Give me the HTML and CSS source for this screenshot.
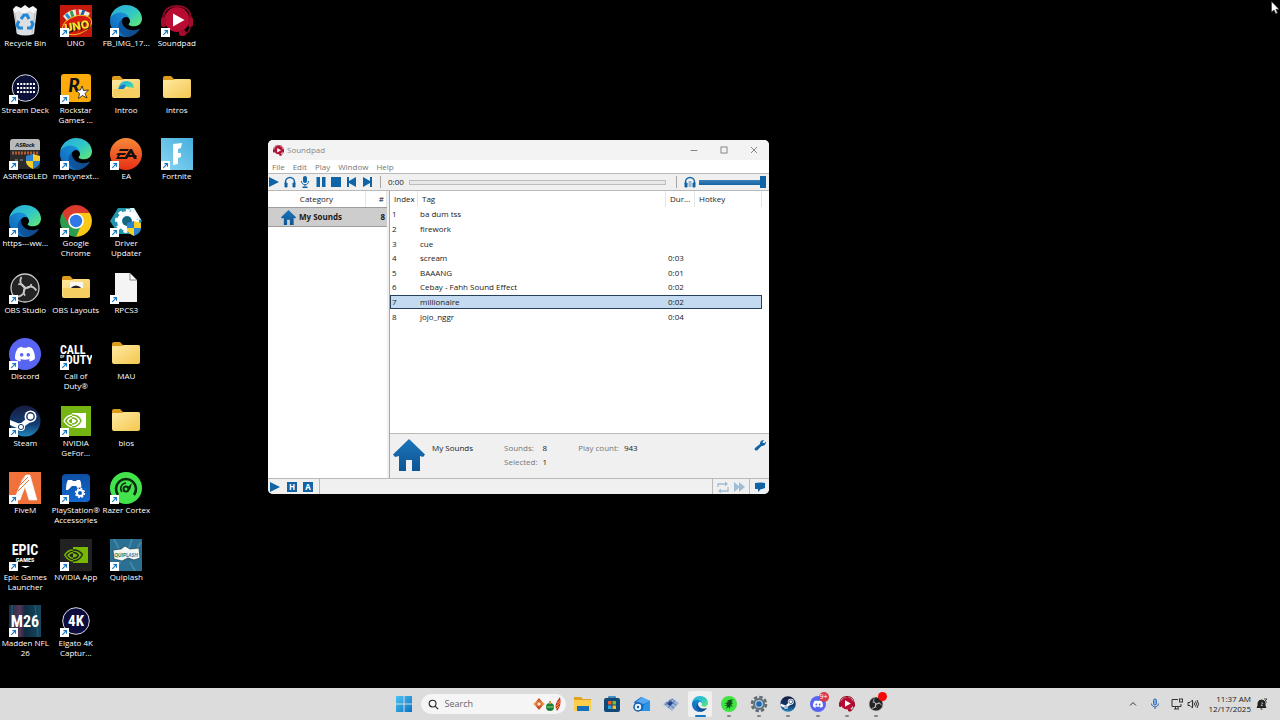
FILE: index.html
```html
<!DOCTYPE html>
<html lang="en">
<head>
  <meta charset="UTF-8">
  <meta name="viewport" content="width=device-width, initial-scale=1.0">
  <title>Desktop</title>
  <link rel="stylesheet" href="styles.css">
</head>
<body>
  <!-- shared icons -->
  <svg class="sprite" width="0" height="0" aria-hidden="true">
    <defs>
      <linearGradient id="gFolder" x1="0" y1="0" x2="1" y2="1"><stop offset="0" stop-color="#ffe9a3"/><stop offset="1" stop-color="#f3c74f"/></linearGradient>
      <linearGradient id="gEdgeA" x1="0" y1="0" x2="1" y2="0"><stop offset="0" stop-color="#0c59a4"/><stop offset="1" stop-color="#114a8b"/></linearGradient>
      <linearGradient id="gEdgeB" x1="1" y1="0" x2="0" y2="1"><stop offset="0" stop-color="#1b9de2"/><stop offset="1" stop-color="#0f5fb4"/></linearGradient>
      <linearGradient id="gEdgeC" x1="0" y1="0" x2="1" y2="1"><stop offset="0" stop-color="#2aa9dc"/><stop offset=".5" stop-color="#2fc6c8"/><stop offset="1" stop-color="#66eb6e"/></linearGradient>
      <linearGradient id="gEa" x1="0" y1="0" x2="0" y2="1"><stop offset="0" stop-color="#f58a38"/><stop offset="1" stop-color="#e62e14"/></linearGradient>
      <linearGradient id="gSteam" x1="0" y1="0" x2="0" y2="1"><stop offset="0" stop-color="#171b42"/><stop offset=".6" stop-color="#123c72"/><stop offset="1" stop-color="#2487bd"/></linearGradient>
      <linearGradient id="gFort" x1="1" y1="0" x2="0" y2="1"><stop offset="0" stop-color="#45aede"/><stop offset="1" stop-color="#8bd7f2"/></linearGradient>
      <linearGradient id="gPs" x1="0" y1="0" x2="0" y2="1"><stop offset="0" stop-color="#0e4fa4"/><stop offset="1" stop-color="#1368cf"/></linearGradient>
      <linearGradient id="gHouse" x1="0" y1="0" x2="0" y2="1"><stop offset="0" stop-color="#1c74ba"/><stop offset="1" stop-color="#0c5594"/></linearGradient>
      <linearGradient id="gWin" x1="0" y1="0" x2="1" y2="1"><stop offset="0" stop-color="#4cc4f2"/><stop offset="1" stop-color="#0a72c6"/></linearGradient>
      <linearGradient id="gMadden" x1="0" y1="0" x2="1" y2="0"><stop offset="0" stop-color="#123348"/><stop offset=".35" stop-color="#573455"/><stop offset=".5" stop-color="#0e2c42"/><stop offset="1" stop-color="#154a62"/></linearGradient>
    </defs>

    <symbol id="arrow" viewBox="0 0 9 9">
      <rect width="9" height="9" fill="#fff"/>
      <path d="M2.3 6.8 6 3.1M3.4 2.6h3.1v3.1" fill="none" stroke="#1978c4" stroke-width="1.1"/>
    </symbol>
    <symbol id="edge" viewBox="0 0 256 256">
      <path fill="url(#gEdgeA)" d="M231.1 190.5c-3.4 1.8-6.9 3.4-10.5 4.7-11.5 4.3-23.6 6.5-35.9 6.5-47.3 0-88.5-32.5-88.5-74.3.1-11.4 6.4-21.9 16.4-27.3-42.8 1.8-53.8 46.4-53.8 72.5 0 73.9 68.1 81.4 82.8 81.4 7.9 0 19.8-2.3 27-4.6l1.3-.4c27.6-9.5 51-28.1 66.6-52.8 1.2-1.9.6-4.3-1.2-5.5-1.3-.8-2.9-.9-4.2-.2z"/>
      <path fill="url(#gEdgeB)" d="M105.7 241.4c-8.9-5.5-16.6-12.8-22.7-21.3-26.3-36-18.4-86.5 17.6-112.8 3.8-2.7 7.7-5.2 11.9-7.2 3.1-1.5 8.4-4.1 15.5-4 10.1.1 19.6 4.9 25.7 13 4 5.4 6.3 11.9 6.4 18.7 0-.2 24.5-79.6-80-79.6-43.9 0-80 41.7-80 78.2-.2 19.3 4 38.5 12.1 56 27.6 58.8 94.8 87.6 156.4 67.1-21.1 6.6-44.1 3.7-62.9-8.1z"/>
      <path fill="url(#gEdgeC)" d="M152.3 148.9c-.8 1-3.3 2.5-3.3 5.7 0 2.6 1.7 5.1 4.7 7.2 14.4 10 41.5 8.7 41.6 8.7 10.7 0 21.1-2.9 30.3-8.3 18.8-11 30.4-31.1 30.4-52.9.3-22.4-8-37.3-11.3-43.9C223.5 23.9 177.7 0 128 0 58 0 1 56.2 0 126.2c.5-36.5 36.8-66 80-66 3.5 0 23.5.3 42 10.1 16.3 8.6 24.9 18.9 30.8 29.2 6.2 10.7 7.3 24.1 7.3 29.5 0 5.3-2.7 13.3-7.8 19.9z"/>
    </symbol>
    <symbol id="folder" viewBox="0 0 32 32">
      <path d="M2 6q0-2 2-2h6l3 3h15q2 0 2 2v4H2z" fill="#dc9b1d"/>
      <path d="M2 9q0-1 1-1h9l2-1h14q2 0 2 2v15q0 2-2 2H4q-2 0-2-2z" fill="url(#gFolder)"/>
    </symbol>
    <symbol id="soundpad" viewBox="0 0 32 32">
      <circle cx="16" cy="14.500" r="12.500" fill="#b80c32"/>
      <path d="M2.500 16C1 5 8 1 16 1s15 4 13.500 15" fill="none" stroke="#8c0925" stroke-width="2"/>
      <rect x="0" y="12" width="5" height="10" rx="2.500" fill="#a50b2c"/>
      <rect x="27" y="12" width="5" height="10" rx="2.500" fill="#a50b2c"/>
      <path d="M29 21c0 6-3 7-6 8" fill="none" stroke="#8c0925" stroke-width="1.500"/>
      <rect x="18" y="25" width="7" height="6" rx="2.500" fill="#a50b2c"/>
      <path d="M12 8.500v13L23.500 15z" fill="#fff"/>
    </symbol>
    <symbol id="shield" viewBox="0 0 14 15">
      <path d="M7 0 14 2v5H7z" fill="#f7cf2c"/><path d="M7 0 0 2v5h7z" fill="#2b83d0"/>
      <path d="M0 7h7v8C3 13 0 11 0 7z" fill="#f7cf2c"/><path d="M14 7H7v8c4-2 7-4 7-8z" fill="#2b83d0"/>
    </symbol>
    <symbol id="steam" viewBox="0 0 32 32">
      <circle cx="16" cy="16" r="15.500" fill="url(#gSteam)"/>
      <path d="m1 15 10 4 7-6 5 3-7 5c0 4-6 6-8 2L1 20z" fill="#fff"/>
      <circle cx="12" cy="22" r="4" fill="#fff"/><circle cx="12" cy="22" r="2.600" fill="none" stroke="#174376" stroke-width="1"/>
      <circle cx="21.500" cy="11.500" r="6" fill="#fff"/><circle cx="21.500" cy="11.500" r="3.700" fill="none" stroke="#16305c" stroke-width="1.400"/>
    </symbol>
    <symbol id="discord" viewBox="0 0 32 32">
      <circle cx="16" cy="16" r="16" fill="#5865f2"/>
      <path transform="translate(6 6.500) scale(.83 .8)" fill="#fff" d="M20.317 4.370a19.790 19.790 0 0 0-4.885-1.515c-.3.400-.5.900-.687 1.287a18.270 18.270 0 0 0-5.487 0c-.2-.5-.4-.9-.696-1.287A19.736 19.736 0 0 0 3.677 4.370C.533 9.046-.32 13.580.099 18.057c1.800 1.400 3.900 2.400 6.024 3.087.5-.6.900-1.300 1.310-2.022l-1.913-1c.1-.1.400-.3.441-.430 3.928 1.793 8.180 1.793 12.062 0l.45.302-1.879 1.100c.4.700.8 1.400 1.309 2.050a19.839 19.839 0 0 0 6.002-3.087c.5-5.177-.838-9.674-3.588-13.687zM8.020 15.330c-1.183 0-2.157-1.085-2.157-2.419 0-1.333.956-2.419 2.157-2.419s2.176 1.096 2.157 2.420c0 1.333-.956 2.418-2.157 2.418zm7.975 0c-1.183 0-2.157-1.085-2.157-2.419 0-1.333.955-2.419 2.157-2.419s2.176 1.096 2.157 2.420c0 1.333-.946 2.418-2.157 2.418z"/>
    </symbol>
    <symbol id="obs" viewBox="0 0 32 32">
      <circle cx="16" cy="16" r="14" fill="#232323" stroke="#c8c8c8" stroke-width="1.300"/>
      <g id="blade"><path d="M12.500 5c-3 5 0 9 4 10.500 3 1 5.500-1 6-3.500" fill="none" stroke="#c8c8c8" stroke-width="1.700"/></g>
      <use href="#blade" transform="rotate(120 16 16)"/><use href="#blade" transform="rotate(240 16 16)"/>
    </symbol>
    <symbol id="nveye" viewBox="0 0 24 16">
      <path d="M9 0h15v16H9z" fill="#77b900"/>
      <path d="M9 3C5 3 2 6 .8 8 3 12 6 14 9.500 14c4 0 7-2 9-4.500M9 5.500C6.500 5.700 5 7 4 8.200 5.500 10.500 7.500 11.500 9.500 11.500c2.500 0 4-1.500 5-3M9 3c5-.3 8 2.500 9.500 4.500M9 5.500c3-.2 4.500 1.500 5.500 3M9 8c2-.5 3 .5 3 1.500" fill="none" stroke="#77b900" stroke-width="1.500"/>
      <path d="M9 3c5-.3 8 2.500 9.500 4.500-2 4-5.500 6.500-9.500 6.500M9 5.500c3-.2 4.500 1.500 5.500 3-1.500 2-3 3-5.500 3" fill="none" stroke="#222" stroke-width="1.300"/>
    </symbol>
    <symbol id="house" viewBox="0 0 32 32">
      <path d="M16 0 32 15.500 30 18l-3-1v15h-8V21h-6v11H6V17l-4 1-2-2.500z" fill="url(#gHouse)"/>
    </symbol>
    <symbol id="play" viewBox="0 0 12 12"><path d="M1 1v10l10-5z"/></symbol>
    <symbol id="head" viewBox="0 0 12 12">
      <path d="M1.500 8V6a4.500 4.500 0 0 1 9 0v2" fill="none" stroke="#1063a5" stroke-width="1.500"/>
      <rect x=".5" y="6.500" width="3" height="5" rx="1"/><rect x="8.500" y="6.500" width="3" height="5" rx="1"/>
    </symbol>
  </svg>

  <main class="desktop">
    <div class="icons">
      <ul class="icon-column">
        <li><a href="#"><span class="pic"><svg viewBox="0 0 32 32"><path d="M4 4 28 4 25 29Q16 32 8 29z" fill="#dcdfe2"/><path d="m4 4 3-3 5 2 4-3 4 3 4-2 4 3-3 4-5-2-5 3-5-3-4 2z" fill="#f4f5f6"/><path d="m6 8 2 20M26 8l-3 20" stroke="#b6babd"/><path d="m12 14 3-4h3l2 4m2 2 2 3-2 4h-4m-4 0h-4l-2-3 2-4" fill="none" stroke="#2188d8" stroke-width="3"/></svg></span>Recycle Bin</a></li>
        <li><a href="#"><span class="pic"><svg viewBox="0 0 32 32"><circle cx="16.500" cy="16" r="13.300" fill="#0b1038" stroke="#d8dae3"/><path d="M8 12h18M8 16h18M8 20h18" stroke="#fff" stroke-width="2" stroke-dasharray="2 1.200"/></svg><svg class="arrow"><use href="#arrow"/></svg></span>Stream Deck</a></li>
        <li><a href="#"><span class="pic"><svg viewBox="0 0 32 32"><rect x="1" y="1" width="30" height="30" rx="3" fill="#2b2b2b"/><path d="M1 12V4q0-3 3-3h24q3 0 3 3v8z" fill="#b9babb"/><text x="16" y="9" text-anchor="middle" class="logo-italic" font-size="6" fill="#111">ASRock</text><path d="M3 15h26" stroke="#b15c31" stroke-width="3" stroke-dasharray="2 1"/><path d="M6 22h8" stroke="#999" stroke-dasharray="3 2"/><use href="#shield" x="17" y="16" width="14" height="15"/></svg><svg class="arrow"><use href="#arrow"/></svg></span>ASRRGBLED</a></li>
        <li><a href="#"><span class="pic"><svg><use href="#edge"/></svg><svg class="arrow"><use href="#arrow"/></svg></span>https---ww...</a></li>
        <li><a href="#"><span class="pic"><svg><use href="#obs"/></svg><svg class="arrow"><use href="#arrow"/></svg></span>OBS Studio</a></li>
        <li><a href="#"><span class="pic"><svg><use href="#discord"/></svg><svg class="arrow"><use href="#arrow"/></svg></span>Discord</a></li>
        <li><a href="#"><span class="pic"><svg><use href="#steam"/></svg><svg class="arrow"><use href="#arrow"/></svg></span>Steam</a></li>
        <li><a href="#"><span class="pic"><svg viewBox="0 0 32 32"><rect width="32" height="32" fill="#f0713a"/><path d="m17 3 4 0 7 25h-8l-4-13-5 13H5L12 11zM12 9l5-6M10 14l8-9" fill="#fff" stroke="#fff" stroke-width=".5"/><path d="m7 17 12-12M9 19l11-11" stroke="#f0713a" stroke-width="1"/></svg><svg class="arrow"><use href="#arrow"/></svg></span>FiveM</a></li>
        <li><a href="#"><span class="pic"><svg viewBox="0 0 32 32"><text x="16" y="16" text-anchor="middle" class="logo-tall" font-size="14" fill="#fff">EPIC</text><text x="16" y="23" text-anchor="middle" class="logo-wide" font-size="5" fill="#fff">GAMES</text><path d="M12 27h9l-4.500 2z" fill="#fff"/></svg><svg class="arrow"><use href="#arrow"/></svg></span>Epic Games<br>Launcher</a></li>
        <li><a href="#"><span class="pic"><svg viewBox="0 0 32 32"><rect width="32" height="32" fill="url(#gMadden)"/><path d="M3 0v32M26 0l3 32" stroke="#1d6480"/><text x="16" y="22" text-anchor="middle" class="logo-narrow" font-size="16" fill="#fff">M26</text></svg><svg class="arrow"><use href="#arrow"/></svg></span>Madden NFL<br>26</a></li>
      </ul>

      <ul class="icon-column">
        <li><a href="#"><span class="pic"><svg viewBox="0 0 32 32"><rect width="32" height="32" fill="#c5190d"/><path d="M3 11Q14-1 30 8l-4 7Q15 8 7 16z" fill="#f5e9d8"/><path d="m6 9 4 5" stroke="#288bd0" stroke-width="3"/><path d="m11 6 2 6" stroke="#31a052" stroke-width="3"/><path d="m17 4 1 7" stroke="#d9302b" stroke-width="3"/><path d="m24 5-3 7" stroke="#265da8" stroke-width="3"/><ellipse cx="17" cy="20" rx="15" ry="9" transform="rotate(-18 17 20)" fill="#d81b0f" stroke="#f2b51d"/><text x="18" y="26" text-anchor="middle" class="logo-wide" font-size="11" fill="#111" transform="rotate(-10 17 22)">UNO</text><text x="17" y="25" text-anchor="middle" class="logo-wide" font-size="11" fill="#ffe02e" transform="rotate(-10 17 22)">UNO</text></svg><svg class="arrow"><use href="#arrow"/></svg></span>UNO</a></li>
        <li><a href="#"><span class="pic"><svg viewBox="0 0 32 32"><rect x="1" y="2" width="30" height="28" rx="3" fill="#fbab0b"/><text x="14" y="20" text-anchor="middle" class="logo-italic" font-size="19" fill="#111">R</text><path d="m22 14 1.500 4.500 5-.5-3.500 3.500 2 4.500-4.500-2.500-4 3 1-5-3.500-3 4.500-.5z" fill="#fff" stroke="#111" stroke-width=".8"/></svg><svg class="arrow"><use href="#arrow"/></svg></span>Rockstar<br>Games ...</a></li>
        <li><a href="#"><span class="pic"><svg><use href="#edge"/></svg><svg class="arrow"><use href="#arrow"/></svg></span>markynext...</a></li>
        <li><a href="#"><span class="pic"><svg viewBox="0 0 32 32"><path d="M16 16 2.200 8A16 16 0 0 0 16 32l7-12z" fill="#2a9d4e"/><path d="M16 16h7l-7 16A16 16 0 0 0 29.800 8H16z" fill="#fbc818"/><path d="M2.200 8a16 16 0 0 1 27.600 0H16l-7 12z" fill="#db3a2d"/><circle cx="16" cy="16" r="7.800" fill="#fff"/><circle cx="16" cy="16" r="6.200" fill="#2f78e8"/></svg><svg class="arrow"><use href="#arrow"/></svg></span>Google<br>Chrome</a></li>
        <li><a href="#"><span class="pic"><svg viewBox="0 0 32 32"><use href="#folder" width="32" height="32"/><path d="M10 10h13v7H10z" fill="#f8f8f3"/><path d="M12 17a5 5 0 0 1 8 0" fill="none" stroke="#222" stroke-width="3"/><path d="M3 16h27v9H3z" fill="#f5cf61"/></svg></span>OBS Layouts</a></li>
        <li><a href="#"><span class="pic"><svg viewBox="0 0 32 32"><text x="0" y="16" class="logo-tall" font-size="12" fill="#fff">CALL</text><text x="0" y="20" class="logo-narrow" font-size="4" fill="#fff">OF</text><text x="6" y="26" class="logo-tall" font-size="12" fill="#fff">DUTY</text></svg><svg class="arrow"><use href="#arrow"/></svg></span>Call of<br>Duty®</a></li>
        <li><a href="#"><span class="pic"><svg viewBox="0 0 32 32"><rect x="1" y="1" width="30" height="30" fill="#74b514"/><path d="M12 8h14v15H12z" fill="#fff"/><path d="M12 10q-6 1-8 6 4 6 9 6 5 0 8-5M12 13q-3 0-4.500 3 2 3 5 3 3 0 5-3" fill="none" stroke="#fff" stroke-width="1.300"/><path d="M12 10q7 0 9 6-3 6-9 6M12 13q4 0 5.500 3-2 3-5.500 3" fill="none" stroke="#74b514" stroke-width="1.400"/></svg><svg class="arrow"><use href="#arrow"/></svg></span>NVIDIA<br>GeFor...</a></li>
        <li><a href="#"><span class="pic"><svg viewBox="0 0 32 32"><rect x="2" y="2" width="28" height="28" rx="4" fill="url(#gPs)"/><path d="M8 8h4l1 1h3l1-1h3q2 4 1 10h-2l-3-4h-4l-4 4H6q0-7 2-10z" fill="#fff"/><circle cx="20" cy="21" r="5.500" fill="#125bb9"/><circle cx="20" cy="21" r="3" fill="none" stroke="#fff" stroke-width="2"/><circle cx="20" cy="21" r="4.500" fill="none" stroke="#fff" stroke-width="1.300" stroke-dasharray="2 1.500"/></svg><svg class="arrow"><use href="#arrow"/></svg></span>PlayStation®<br>Accessories</a></li>
        <li><a href="#"><span class="pic"><svg viewBox="0 0 32 32"><rect width="32" height="32" fill="#222"/><use href="#nveye" x="4" y="8" width="24" height="16"/></svg><svg class="arrow"><use href="#arrow"/></svg></span>NVIDIA App</a></li>
        <li><a href="#"><span class="pic"><svg viewBox="0 0 32 32"><circle cx="16" cy="16" r="13.300" fill="#0b0b3c" stroke="#d8dae3"/><text x="16" y="21" text-anchor="middle" class="logo-narrow" font-size="15" fill="#fff">4K</text></svg><svg class="arrow"><use href="#arrow"/></svg></span>Elgato 4K<br>Captur...</a></li>
      </ul>

      <ul class="icon-column">
        <li><a href="#"><span class="pic"><svg><use href="#edge"/></svg><svg class="arrow"><use href="#arrow"/></svg></span>FB_IMG_17...</a></li>
        <li><a href="#"><span class="pic"><svg viewBox="0 0 32 32"><use href="#folder" width="32" height="32"/><path d="M8 18Q9 9 17 9q7 1 7 7l-6-1q-2-2-5 3z" fill="url(#gEdgeC)"/><path d="M8 18q2-6 8-5l-3 5z" fill="#1877bf"/><path d="M3 17h27v8H3z" fill="#f5cf61"/></svg></span>Introo</a></li>
        <li><a href="#"><span class="pic"><svg viewBox="0 0 32 32"><circle cx="16" cy="16" r="16" fill="url(#gEa)"/><path d="M10 11h9l-1 2H9zM8 15h8l-1 2h-5l-1 2h6l5-8h2l5 10h-3l-3-6-4 6H6l2-4H6zM19 17h7l1 2h-8z" fill="#16100e"/></svg><svg class="arrow"><use href="#arrow"/></svg></span>EA</a></li>
        <li><a href="#"><span class="pic"><svg viewBox="0 0 32 32"><path d="m8 3 16 0 8 13-8 13H8L0 16z" fill="#1f95ae"/><path d="m20 3 4 0 7 12-9-2z" fill="#e9f4f5"/><circle cx="17" cy="16" r="7.500" fill="none" stroke="#fff" stroke-width="5"/><circle cx="17" cy="16" r="10.500" fill="none" stroke="#fff" stroke-width="3" stroke-dasharray="4 4"/><circle cx="17" cy="16" r="4.500" fill="#17657d"/><use href="#shield" x="17" y="16" width="14" height="15"/></svg><svg class="arrow"><use href="#arrow"/></svg></span>Driver<br>Updater</a></li>
        <li><a href="#"><span class="pic"><svg viewBox="0 0 32 32"><path d="M5 1h15l7 7v22H5z" fill="#f4f4f4"/><path d="m20 1 7 7h-7z" fill="#fff" stroke="#555" stroke-width=".7"/></svg><svg class="arrow"><use href="#arrow"/></svg></span>RPCS3</a></li>
        <li><a href="#"><span class="pic"><svg><use href="#folder"/></svg></span>MAU</a></li>
        <li><a href="#"><span class="pic"><svg><use href="#folder"/></svg></span>bios</a></li>
        <li><a href="#"><span class="pic"><svg viewBox="0 0 32 32"><circle cx="16" cy="16" r="16" fill="#42e34b"/><path d="M8 23a10 10 0 1 1 16 0" fill="none" stroke="#0b2a10" stroke-width="2.600"/><path d="M12 20a5.500 5.500 0 0 1 4-9" fill="none" stroke="#0b2a10" stroke-width="1.500"/><circle cx="16" cy="17" r="2.500" fill="none" stroke="#0b2a10" stroke-width="2"/><path d="m17 16 5-5-2 7z" fill="#0b2a10"/></svg><svg class="arrow"><use href="#arrow"/></svg></span>Razer Cortex</a></li>
        <li><a href="#"><span class="pic"><svg viewBox="0 0 32 32"><rect width="32" height="32" fill="#2b6f92"/><path d="m4 0 5 10M22 0l-3 9M31 3l-5 8M5 31l6-9M25 32l-5-9" stroke="#3e88a8" stroke-width="2"/><path d="m3 11 8-1 4-3 5 3 9-1 1 10-6 2-6-2-6 3-8-2z" fill="#f2f7f2" stroke="#123a52" stroke-width=".7"/><text x="16" y="18" text-anchor="middle" class="logo-italic" font-size="5" fill="#267f46">QUIP<tspan fill="#2b7fb5">LASH</tspan></text></svg><svg class="arrow"><use href="#arrow"/></svg></span>Quiplash</a></li>
      </ul>

      <ul class="icon-column">
        <li><a href="#"><span class="pic"><svg><use href="#soundpad"/></svg><svg class="arrow"><use href="#arrow"/></svg></span>Soundpad</a></li>
        <li><a href="#"><span class="pic"><svg><use href="#folder"/></svg></span>intros</a></li>
        <li><a href="#"><span class="pic"><svg viewBox="0 0 32 32"><rect width="32" height="32" fill="url(#gFort)"/><path d="m12 6 9-1-1 5-3 1v4h3v4l-3 1v6l-5 1z" fill="#fff"/></svg><svg class="arrow"><use href="#arrow"/></svg></span>Fortnite</a></li>
      </ul>
    </div>

    <section class="window">
      <header class="titlebar">
        <svg class="app-icon"><use href="#soundpad"/></svg>
        <h1>Soundpad</h1>
        <div class="win-buttons">
          <button aria-label="Minimize"><svg viewBox="0 0 8 8"><path d="M.5 4.500h7"/></svg></button>
          <button aria-label="Maximize"><svg viewBox="0 0 8 8"><rect x="1" y="1" width="6" height="6"/></svg></button>
          <button aria-label="Close"><svg viewBox="0 0 8 8"><path d="m1 1 6 6M7 1 1 7"/></svg></button>
        </div>
      </header>
      <nav class="menubar">
        <button>File</button>
        <button>Edit</button>
        <button>Play</button>
        <button>Window</button>
        <button>Help</button>
      </nav>
      <div class="toolbar">
        <div class="transport">
          <button aria-label="Play"><svg><use href="#play"/></svg></button>
          <button aria-label="Headphones"><svg><use href="#head"/></svg></button>
          <button aria-label="Microphone"><svg viewBox="0 0 12 12"><rect x="4" y="0" width="4" height="7" rx="2"/><path d="M2.500 5c0 5 7 5 7 0M6 8.500v2" fill="none" stroke="#1063a5"/><rect x="3.500" y="10.500" width="5" height="1.500"/></svg></button>
          <button aria-label="Pause"><svg viewBox="0 0 12 12"><path d="M1.500 1h3.500v10H1.500zM7 1h3.500v10H7z"/></svg></button>
          <button aria-label="Stop"><svg viewBox="0 0 12 12"><path d="M1 1h10v10H1z"/></svg></button>
          <button aria-label="Previous"><svg viewBox="0 0 12 12"><path d="M1 1h2v4l7-4v10L3 7v4H1z"/></svg></button>
          <button aria-label="Next"><svg viewBox="0 0 12 12"><path d="M11 1H9v4L2 1v10l7-4v4h2z"/></svg></button>
        </div>
        <span class="sep"></span>
        <span class="time">0:00</span>
        <progress value="0" max="1" aria-label="Position"></progress>
        <span class="sep"></span>
        <svg class="head" viewBox="0 0 12 12"><use href="#head"/><path d="M4.500 6h3M4.500 8h3M4.500 10h3" stroke="#1063a5" stroke-width=".8"/></svg>
        <input class="volume" type="range" min="0" max="100" value="100" aria-label="Volume">
      </div>

      <div class="panes">
        <div class="side-pane">
          <table class="categories">
            <thead>
              <tr><th>Category</th><th class="count">#</th></tr>
            </thead>
            <tbody>
              <tr><td><span class="category"><svg><use href="#house"/></svg>My Sounds</span></td><td class="count">8</td></tr>
            </tbody>
          </table>
        </div>
        <div class="main-pane">
          <div class="list">
            <table class="sounds">
              <colgroup><col class="c-index"><col><col class="c-dur"><col class="c-hotkey"></colgroup>
              <thead>
                <tr><th>Index</th><th>Tag</th><th>Dur...</th><th>Hotkey</th></tr>
              </thead>
              <tbody>
                <tr><td>1</td><td>ba dum tss</td><td></td><td></td></tr>
                <tr><td>2</td><td>firework</td><td></td><td></td></tr>
                <tr><td>3</td><td>cue</td><td></td><td></td></tr>
                <tr><td>4</td><td>scream</td><td>0:03</td><td></td></tr>
                <tr><td>5</td><td>BAAANG</td><td>0:01</td><td></td></tr>
                <tr><td>6</td><td>Cebay - Fahh Sound Effect</td><td>0:02</td><td></td></tr>
                <tr class="selected"><td>7</td><td>millionaire</td><td>0:02</td><td></td></tr>
                <tr><td>8</td><td>jojo_nggr</td><td>0:04</td><td></td></tr>
              </tbody>
            </table>
          </div>
          <div class="details">
            <svg class="house"><use href="#house"/></svg>
            <strong class="name">My Sounds</strong>
            <dl class="stats">
              <dt>Sounds:</dt><dd>8</dd>
              <dt>Selected:</dt><dd>1</dd>
            </dl>
            <dl class="stats">
              <dt>Play count:</dt><dd>943</dd>
            </dl>
            <button class="wrench" aria-label="Settings"><svg viewBox="0 0 12 12"><path d="m1 9 5-4q0-4 4-4L8.500 3 9 4l1.500 0 1.500-1.500Q12 7 7.500 7L3 11.500Q1 12 .5 10z"/></svg></button>
          </div>
        </div>
      </div>

      <footer class="statusbar">
        <button aria-label="Play"><svg><use href="#play"/></svg></button>
        <button class="letter">H</button>
        <button class="letter">A</button>
        <span class="sep"></span>
        <div class="status-right">
          <button class="off" aria-label="Repeat"><svg viewBox="0 0 12 12"><path d="M1 6V3h8M11 6v4H3" fill="none" stroke="#9fbdd5" stroke-width="1.300"/><path d="m8 .5 3 2.500-3 2.500zM4 7.500 1 10l3 2.500z"/></svg></button>
          <button class="off" aria-label="Continue"><svg viewBox="0 0 12 12"><path d="M1 1v10l6-5zM6 1v10l6-5z"/></svg></button>
          <span class="sep"></span>
          <button aria-label="Feedback"><svg viewBox="0 0 12 12"><path d="M1 2q5-1 10 0v5q-2 1-4 1l-3 3V8H1z"/></svg></button>
        </div>
      </footer>
    </section>
  </main>

  <footer class="taskbar">
    <div class="taskbar-center">
      <button class="app" aria-label="Start"><svg viewBox="0 0 20 20"><path d="M2 2h7.500v7.500H2zM10.500 2H18v7.500h-7.500zM2 10.500h7.500V18H2zM10.500 10.500H18V18h-7.500z" fill="url(#gWin)"/></svg></button>
      <label class="search">
        <svg viewBox="0 0 12 12"><circle cx="5" cy="5" r="3.700" fill="none" stroke="#222" stroke-width="1.200"/><path d="m8 8 3 3" stroke="#222" stroke-width="1.300"/></svg>
        <input type="text" placeholder="Search" aria-label="Search">
        <svg class="ornaments" viewBox="0 0 30 16"><path d="m6 2 5 6-5 6-5-6z" fill="#cf4b2d"/><path d="m6 4 6 4-6 3-6-3z" fill="#e9993a"/><path d="m6 4 3 4-3 4-3-4z" fill="#cf4b2d"/><circle cx="6" cy="8" r="1.700" fill="#fff0c0"/><circle cx="17" cy="11" r="4" fill="#15803f"/><path d="M13.500 11h7" stroke="#8cc85a" stroke-width="1.200"/><path d="M16 5h2v3h-2z" fill="#c79a3a"/><path d="M27 1q2 8-3 14-4-6 3-14z" fill="#c83620"/><path d="m24 7 3-2M22 11l5-4M23 13l3-3" stroke="#f0ba55" stroke-width=".8"/></svg>
      </label>
      <div class="apps">
        <button class="app" aria-label="File Explorer"><svg viewBox="0 0 20 20"><path d="M1 3h7l2 2h8v3H1z" fill="#e0a220"/><path d="M1 6h17v11H1z" fill="#fdce4b"/><path d="M4 12h12v5H4z" fill="#1670bd"/></svg></button>
        <button class="app" aria-label="Store"><svg viewBox="0 0 20 20"><path d="M7 5V3h6v2" fill="none" stroke="#1976b5" stroke-width="1.500"/><rect x="2" y="4" width="16" height="14" rx="2" fill="#124875"/><path d="M6 7h3.500v3.500H6z" fill="#f05a2b"/><path d="M10.500 7H14v3.500h-3.500z" fill="#80bb2b"/><path d="M6 11.500h3.500V15H6z" fill="#26a4e4"/><path d="M10.500 11.500H14V15h-3.500z" fill="#fcb92c"/></svg></button>
        <button class="app" aria-label="Mail"><svg viewBox="0 0 20 20"><path d="m3 8 7-5 9 4v10H7z" fill="#1b72d1"/><path d="m5 8 6-5 8 4-6 3z" fill="#55a8ef"/><path d="m13 11 6-4v10h-8z" fill="#2c93e8"/><circle cx="7" cy="13" r="4" fill="#e7f2fc" stroke="#155ca9" stroke-width="1.500"/><circle cx="7" cy="13" r="1.200" fill="#155ca9"/></svg></button>
        <button class="app" aria-label="Boards"><svg viewBox="0 0 20 20"><path d="m2 10 9-6 7 5-7 8z" fill="#9db3d8"/><path d="m5 8 8 6M8 6l7 5M7 14l7-8M4 11l8-6" stroke="#456aa8" stroke-width=".8"/><path d="m9 7 3 2-3 3-3-2z" fill="#274385"/></svg></button>
        <button class="app active" aria-label="Edge"><svg viewBox="0 0 20 20"><use href="#edge" x="2" y="2" width="16" height="16"/></svg></button>
        <button class="app open" aria-label="Razer"><svg viewBox="0 0 20 20"><circle cx="10" cy="10" r="8" fill="#40e344"/><path d="M14.500 5.500q-5-.5-7 2l2.500.3-4.500 1.700 3 .5-3 2 3-.3-1.500 3 3-2v2.500q2-2 1.500-4l2 2q0-2-1.500-3l2-.5-1.500-1 1.500-1-2-.5z" fill="#114b19"/></svg></button>
        <button class="app open" aria-label="Settings"><svg viewBox="0 0 20 20"><circle cx="10" cy="10" r="7" fill="none" stroke="#626c75" stroke-width="2.600" stroke-dasharray="3.500 2"/><circle cx="10" cy="10" r="5" fill="#b8c8d6" stroke="#62707c" stroke-width="2"/><circle cx="10" cy="10" r="2.800" fill="#1b6ab6"/></svg></button>
        <button class="app open" aria-label="Steam"><svg viewBox="0 0 20 20"><use href="#steam" x="2" y="2" width="16" height="16"/></svg></button>
        <button class="app open" aria-label="Discord"><svg viewBox="0 0 20 20"><use href="#discord" x="2" y="2" width="16" height="16"/></svg><span class="badge">9+</span></button>
        <button class="app open" aria-label="Soundpad"><svg viewBox="0 0 20 20"><use href="#soundpad" x="2" y="2" width="16" height="16"/></svg></button>
        <button class="app open" aria-label="OBS"><svg viewBox="0 0 20 20"><use href="#obs" x="2" y="2" width="16" height="16"/></svg><span class="badge dot"></span></button>
      </div>
    </div>
    <div class="tray">
      <button aria-label="Hidden icons"><svg viewBox="0 0 12 12"><path d="m3 7.500 3-3 3 3"/></svg></button>
      <button aria-label="Microphone"><svg viewBox="0 0 12 12"><rect x="4.500" y="1" width="3" height="6" rx="1.500" fill="#7fb0e4" stroke="#2d68b0"/><path d="M2.500 5.500c0 4.500 7 4.500 7 0M6 9v2" stroke="#2d68b0"/></svg></button>
      <div class="tray-pair">
        <button aria-label="Network"><svg viewBox="0 0 12 12"><path d="M7 1.500H1v7h9V6M3 11h5M4.500 8.500V11M7 8.500V11"/><rect x="8.500" y="1" width="3" height="3"/></svg></button>
        <button aria-label="Sound"><svg viewBox="0 0 12 12"><path d="M1 4.500h2L5.500 2v8L3 7.500H1zM7 4.500q1 1.500 0 3M8.500 3.200q2 2.800 0 5.600M10 2q3 4 0 8"/></svg></button>
      </div>
      <time class="clock">11:37 AM<br>12/17/2025</time>
      <button aria-label="Notifications"><svg viewBox="0 0 12 12"><path d="M1 9.500h9L9 8V5Q8.500 2 5.500 2T2 5v3zM4.500 11h2" fill="#222" stroke="#222"/><path d="M8 1h3L8 4h3" stroke="#222" stroke-width=".8"/><path d="M5 5h2L5 7.500h2" stroke="#ddd" stroke-width=".6"/></svg></button>
    </div>
  </footer>

  <svg class="cursor" viewBox="0 0 9 13"><path d="M.5.500v10.500l2.500-2 1.800 3.700 1.700-.8L4.800 8.300H8z" fill="#fff" stroke="#333" stroke-width=".6"/></svg>
</body>
</html>
```

FILE: styles.css
```css
* {
  box-sizing: border-box;
}
body {
  margin: 0;
  height: 100vh;
  display: flex;
  flex-direction: column;
  background: #000;
  font-family: "Open Sans", "Noto Sans", sans-serif;
  font-size: 8px;
  line-height: 10px;
  color: #1a1a1a;
  overflow: hidden;
}
button {
  display: flex;
  align-items: center;
  justify-content: center;
  padding: 0;
  border: 0;
  background: none;
  font: inherit;
  color: inherit;
}
svg {
  display: block;
  flex: none;
}
.sprite {
  position: absolute;
}

/* desktop icons */
.desktop {
  position: relative;
  flex: 1;
  display: flex;
  padding: 5px 0 16px;
}
.icons {
  display: flex;
  width: 202px;
}
.icon-column {
  flex: 1;
  min-width: 0;
  display: grid;
  grid-template-rows: repeat(10, 1fr);
  margin: 0;
  padding: 0;
  list-style: none;
}
.icon-column li {
  min-height: 0;
}
.icon-column a {
  display: flex;
  flex-direction: column;
  align-items: center;
  gap: 1px;
  color: #fff;
  text-align: center;
  text-decoration: none;
  white-space: nowrap;
}
.pic {
  position: relative;
}
.pic svg {
  width: 32px;
  height: 32px;
}
.pic .arrow {
  position: absolute;
  left: 0;
  bottom: 0;
  width: 9px;
  height: 9px;
}
.logo-narrow {
  font-family: "Roboto Condensed", "Liberation Sans Narrow", "Liberation Sans", sans-serif;
  font-weight: 700;
}
.logo-tall {
  font-family: "Liberation Sans Narrow", "Roboto Condensed", "Liberation Sans", sans-serif;
  font-weight: 700;
}
.logo-wide {
  font-family: "Inter", sans-serif;
  font-weight: 800;
}
.logo-italic {
  font-family: "Lato", sans-serif;
  font-weight: 900;
  font-style: italic;
}

/* soundpad window */
.window {
  position: absolute;
  left: 268px;
  top: 140px;
  width: 501px;
  height: 354px;
  display: flex;
  flex-direction: column;
  border-radius: 5px;
  background: #fff;
  overflow: hidden;
}
.titlebar {
  display: flex;
  align-items: center;
  height: 20px;
  padding-left: 5px;
  background: #f3f3f3;
  color: #888;
}
.app-icon {
  width: 11px;
  height: 11px;
}
h1 {
  flex: 1;
  margin: 0 0 0 3px;
  font-size: 8px;
  font-weight: 400;
}
.win-buttons {
  display: flex;
}
.win-buttons button {
  width: 30px;
  height: 20px;
}
.win-buttons svg {
  width: 8px;
  height: 8px;
  fill: none;
  stroke: #888;
}
.menubar {
  display: flex;
  align-items: center;
  gap: 8px;
  height: 13px;
  padding-left: 4px;
  color: #777;
}
.toolbar {
  display: flex;
  align-items: center;
  height: 18px;
  padding-right: 3px;
  border-top: 1px solid #b9b9b9;
  border-bottom: 1px solid #b9b9b9;
  background: #f0f0f0;
}
.transport {
  display: flex;
  justify-content: space-between;
  width: 105px;
}
.window button svg {
  fill: #1063a5;
}
.window .win-buttons svg {
  fill: none;
}
.transport svg,
.statusbar svg,
.head,
.wrench svg {
  width: 12px;
  height: 12px;
}
.sep {
  width: 1px;
  height: 12px;
  background: #a5a5a5;
}
.transport + .sep {
  margin: 0 7px;
}
progress {
  appearance: none;
  flex: 1;
  min-width: 0;
  height: 5px;
  margin: 0 10px 0 5px;
  border: 1px solid #bcbcbc;
  background: #e8e8e8;
}
progress::-webkit-progress-bar {
  background: #e8e8e8;
}
.head {
  margin: 0 3px 0 7px;
  fill: #1063a5;
}
.volume {
  appearance: none;
  width: 67px;
  height: 12px;
  margin: 0;
  background: linear-gradient(#3f82ba, #1063a5) center / 100% 5px no-repeat;
}
.volume::-webkit-slider-thumb {
  appearance: none;
  width: 6px;
  height: 12px;
  background: #1063a5;
}

.panes {
  flex: 1;
  display: flex;
  min-height: 0;
  background: #f0f0f0;
}
table {
  width: 100%;
  border-collapse: separate;
  border-spacing: 0;
  table-layout: fixed;
}
th {
  font-weight: 400;
  text-align: left;
}
th,
td {
  padding: 0 2px;
}
thead th {
  height: 16px;
  border-right: 1px solid #e5e5e5;
}
.side-pane {
  width: 119px;
  background: #fff;
}
.categories th {
  text-align: center;
}
.categories .count {
  width: 21px;
  text-align: right;
}
.categories tbody {
  font-weight: 700;
}
.categories td {
  height: 20px;
  background: #cdcdcd;
  border-top: 1px solid #9d9d9d;
  border-bottom: 1px solid #9d9d9d;
}
.category {
  display: flex;
  align-items: center;
  gap: 3px;
  padding-left: 11px;
}
.category svg {
  width: 15px;
  height: 15px;
}
.main-pane {
  flex: 1;
  display: flex;
  flex-direction: column;
  margin-left: 2px;
  border-left: 1px solid #a8a8a8;
}
.list {
  flex: 1;
  padding-right: 7px;
  background: #fff;
}
.sounds {
  height: 133px;
}
.c-index {
  width: 28px;
}
.c-dur {
  width: 29px;
}
.c-hotkey {
  width: 67px;
}
.sounds th {
  padding-left: 4px;
}
.selected {
  background: #c3daf0;
  outline: 1px solid #27405c;
  outline-offset: -1px;
}
.details {
  display: flex;
  height: 45px;
  padding: 5px 3px;
  border-top: 1px solid #b9b9b9;
}
.house {
  width: 32px;
  height: 32px;
}
.name {
  width: 72px;
  margin-left: 7px;
  padding-top: 4px;
  font-weight: 400;
}
.stats {
  display: grid;
  grid-template-columns: auto auto;
  align-content: start;
  gap: 4px 5px;
  margin: 0 31px 0 0;
  padding-top: 4px;
}
.stats dt {
  color: #777;
}
.stats dd {
  margin: 0;
}
.wrench {
  align-self: flex-start;
  margin-left: auto;
}
.statusbar {
  display: flex;
  align-items: center;
  gap: 6px;
  height: 16px;
  padding: 0 3px 0 1px;
  border-top: 1px solid #b9b9b9;
  background: #f0f0f0;
}
.letter {
  width: 10px;
  height: 10px;
  background: #1063a5;
  color: #fff;
  font-weight: 700;
}
.statusbar .sep {
  height: 15px;
  background: #b9b9b9;
}
.status-right {
  display: flex;
  align-items: center;
  gap: 4px;
  height: 15px;
  margin-left: auto;
  padding-left: 4px;
  border-left: 1px solid #b9b9b9;
}
.window .off svg {
  fill: #9fbdd5;
}

/* taskbar */
.taskbar {
  display: grid;
  grid-template-columns: 1fr auto 1fr;
  align-items: center;
  height: 32px;
  background: #dcdcdc;
}
.taskbar-center {
  grid-column: 2;
  display: flex;
  align-items: center;
  gap: 5px;
}
.app {
  position: relative;
  width: 24px;
  height: 26px;
}
.app > svg {
  width: 20px;
  height: 20px;
}
.app.active {
  border-radius: 2px;
  background: #f0f0f0;
}
.app.active::after,
.app.open::after {
  content: "";
  position: absolute;
  bottom: 0;
  width: 4px;
  height: 2px;
  border-radius: 1px;
  background: #858585;
}
.app.active::after {
  width: 11px;
  background: #0f78c8;
}
.badge {
  position: absolute;
  top: 1px;
  right: 1px;
  width: 10px;
  height: 10px;
  border-radius: 50%;
  background: #d83a48;
  color: #fff;
  font-size: 7px;
}
.badge.dot {
  width: 9px;
  height: 9px;
  background: #f50a0a;
}
.search {
  display: flex;
  align-items: center;
  gap: 6px;
  width: 145px;
  height: 20px;
  padding: 0 3px 0 7px;
  border-radius: 10px;
  background: #f5f5f5;
}
.search svg {
  width: 11px;
  height: 11px;
}
.search .ornaments {
  width: 30px;
  height: 16px;
}
.search input {
  flex: 1;
  min-width: 0;
  padding: 0;
  border: 0;
  background: none;
  font: inherit;
  font-size: 9px;
}
.search input::placeholder {
  color: #666;
}
.apps {
  display: flex;
  justify-content: space-between;
  width: 318px;
}
.tray {
  grid-column: 3;
  display: flex;
  align-items: center;
  justify-content: flex-end;
  gap: 10px;
  padding-right: 12px;
}
.tray svg {
  width: 12px;
  height: 12px;
  fill: none;
  stroke: #333;
}
.tray-pair {
  display: flex;
  gap: 4px;
}
.clock {
  text-align: right;
}
.clock + button {
  margin-left: -5px;
}

.cursor {
  position: absolute;
  top: 1px;
  right: 0;
  width: 9px;
  height: 13px;
}
```
